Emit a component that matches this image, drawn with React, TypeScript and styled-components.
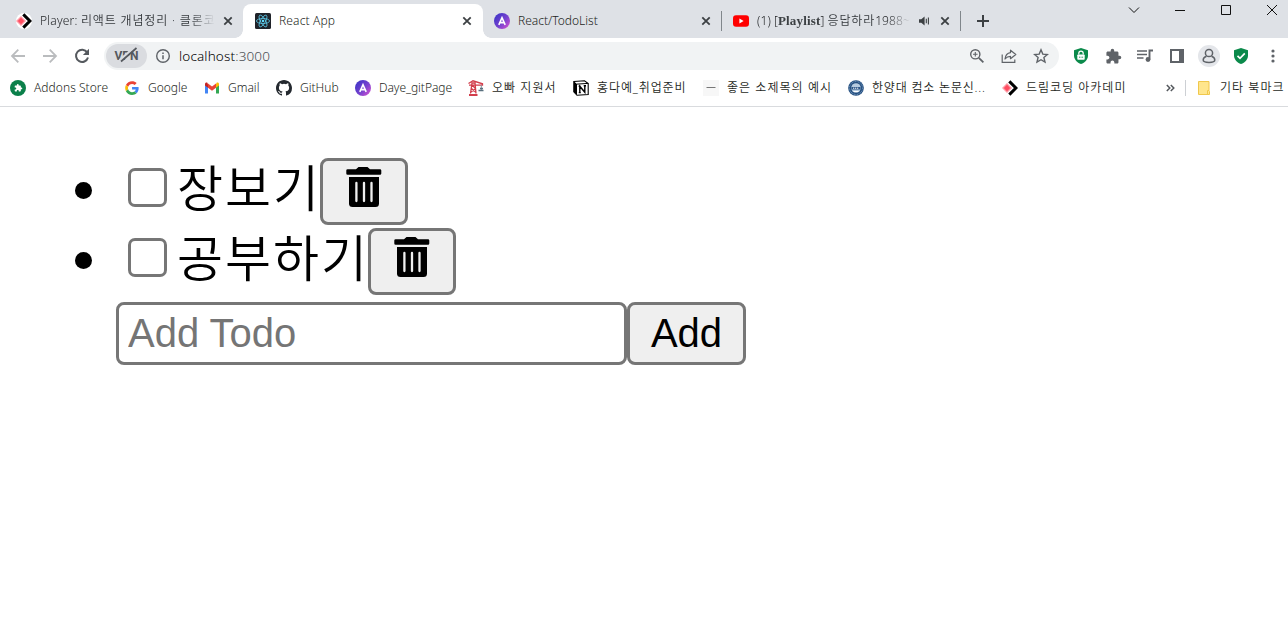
import React from 'react';
import styled, { createGlobalStyle, css } from 'styled-components';

const GlobalStyle = createGlobalStyle`
  * { box-sizing: border-box; }
  html, body { margin: 0; padding: 0; background: #fff; overflow: hidden; }
  body, button, input { font-family: "Noto Sans", "Noto Sans CJK KR", sans-serif; font-weight: 350; }
`;

const Browser = styled.div`
  width: 1288px;
  height: 617px;
  background: #fff;
  overflow: hidden;
`;

/* ---------- tab strip ---------- */
const TabStrip = styled.div`
  display: flex;
  height: 38px;
  padding: 4px 0 0 4px;
  background: #dee1e6;
`;

const Tab = styled.div<{ $active?: boolean }>`
  position: relative;
  display: flex;
  align-items: center;
  width: 239px;
  height: 34px;
  padding: 0 10px 0 12px;
  ${p => p.$active && css`
    width: 240px;
    margin-right: -1px;
    padding-right: 11px;
    background: #fff;
    border-radius: 8px 8px 0 0;
    &::before, &::after {
      content: '';
      position: absolute;
      bottom: 0;
      width: 8px;
      height: 8px;
    }
    &::before { left: -8px; background: radial-gradient(circle at 0 0, transparent 7.5px, #fff 8px); }
    &::after { right: -8px; background: radial-gradient(circle at 100% 0, transparent 7.5px, #fff 8px); }
  `}
`;

const TabTitle = styled.div<{ $width: number; $spacing: number; $fade?: boolean }>`
  width: ${p => p.$width}px;
  margin-left: 8px;
  overflow: hidden;
  white-space: nowrap;
  font-size: 12px;
  line-height: 18px;
  letter-spacing: ${p => p.$spacing}px;
  color: #1d1f22;
  ${p => p.$fade && css`mask-image: linear-gradient(to right, #000 calc(100% - 24px), transparent);`}
`;

const SerifBold = styled.b`
  font-family: "Liberation Serif", serif;
  font-size: 13px;
  letter-spacing: 0.15px;
  color: #3c4043;
`;

const Hangul = styled.span`
  letter-spacing: 0.85px;
  color: #34383c;
`;

const TabActions = styled.div`
  display: flex;
  align-items: center;
  gap: 10px;
  margin-left: auto;
`;

const TabDivider = styled.div`
  width: 1px;
  height: 20px;
  margin: 7px -1px 0 0;
  background: #80868b;
`;

const NewTab = styled.div`
  display: flex;
  margin: 11px 0 0 17px;
`;

const WindowControls = styled.div`
  display: flex;
  gap: 34px;
  margin: 0 10px 0 auto;
`;

/* ---------- toolbar ---------- */
const Toolbar = styled.div`
  display: flex;
  align-items: center;
  height: 36px;
  padding-left: 10px;
`;

const NavButtons = styled.div`
  display: flex;
  gap: 16px;
  width: 94px;
`;

const Omnibox = styled.div`
  display: flex;
  align-items: center;
  width: 955px;
  height: 28px;
  padding: 0 10px 0 2px;
  border-radius: 14px;
  background: #f1f3f4;
`;

const VpnChip = styled.div`
  position: relative;
  display: flex;
  align-items: center;
  justify-content: center;
  width: 41px;
  height: 24px;
  margin-right: 8px;
  border-radius: 12px;
  background: #dadce0;
  color: #55595e;
  font: bold 12px/24px Roboto, sans-serif;
  svg { position: absolute; left: 8px; top: 3px; }
`;

const Url = styled.div`
  margin-left: 8px;
  font-size: 13.5px;
  line-height: 20px;
  letter-spacing: 0.15px;
  color: #000;
  span { color: #4a4e53; }
`;

const OmniboxActions = styled.div`
  display: flex;
  gap: 16px;
  margin-left: auto;
`;

const Extensions = styled.div`
  display: flex;
  align-items: center;
  gap: 10px;
  margin-left: 11px;
`;

const IconSlot = styled.div<{ $filled?: boolean }>`
  display: flex;
  align-items: center;
  justify-content: center;
  width: 22px;
  height: 22px;
  border-radius: 50%;
  background: ${p => (p.$filled ? '#e4e6ea' : 'transparent')};
`;

/* ---------- bookmarks ---------- */
const BookmarkBar = styled.div`
  display: flex;
  align-items: center;
  height: 33px;
  padding: 0 0 5px 10px;
  border-bottom: 1px solid #d9dbde;
`;

const Bookmark = styled.div<{ $width: number; $spacing: number; $gap?: number }>`
  display: flex;
  flex: none;
  align-items: center;
  gap: ${p => p.$gap ?? 8}px;
  width: ${p => p.$width}px;
  font-size: 12px;
  line-height: 18px;
  letter-spacing: ${p => p.$spacing}px;
  white-space: nowrap;
  color: #1d1f22;
  svg { flex: none; }
`;

const BarDivider = styled.div`
  width: 1px;
  height: 16px;
  margin: 0 12px 0 10px;
  background: #cdd0d4;
`;

/* ---------- page ---------- */
const Page = styled.main`
  padding: 51px 0 0 116px;
`;

const TodoList = styled.ul`
  margin: 0;
  padding: 0;
  list-style: none;
`;

const TodoItem = styled.li`
  display: flex;
  align-items: flex-start;
  height: 70px;
  margin-left: -41px;
  color: #000;
`;

const Bullet = styled.span`
  width: 17px;
  height: 17px;
  margin: 24px 36px 0 0;
  border-radius: 50%;
  background: #000;
`;

const Checkbox = styled.input`
  appearance: none;
  width: 39px;
  height: 39px;
  margin: 10px 10px 0 0;
  border: 3px solid #767676;
  border-radius: 7px;
  background: #fff;
`;

const TodoText = styled.span`
  height: 67px;
  font: 350 50px/67px "Noto Sans CJK KR", sans-serif;
  letter-spacing: 2px;
  margin: -6px -1px 0 0;
  white-space: nowrap;
`;

const buttonBox = css`
  border: 3px solid #767676;
  border-radius: 8px;
  background: #efefef;
  color: #000;
`;

const DeleteButton = styled.button`
  ${buttonBox}
  display: flex;
  justify-content: center;
  width: 88px;
  height: 67px;
  padding: 6px 0 0;
`;

const AddForm = styled.form`
  display: flex;
  margin-top: 4px;
`;

const TodoInput = styled.input`
  width: 511px;
  height: 63px;
  padding: 0 9px;
  border: 3px solid #767676;
  border-radius: 8px;
  background: #fff;
  font: 40px "Liberation Sans", Arial, sans-serif;
  outline: none;
  &::placeholder { color: #757575; opacity: 1; }
`;

const AddButton = styled.button`
  ${buttonBox}
  width: 119px;
  height: 63px;
  padding: 0;
  font: 40px "Liberation Sans", Arial, sans-serif;
`;

/* ---------- icons ---------- */
const CloseIcon = () => (
  <svg width="10" height="10" viewBox="0 0 10 10"><path d="M1.3 1.3l7.4 7.4M8.7 1.3L1.3 8.7" stroke="#3c4043" strokeWidth="1.8" /></svg>
);
const DreamIcon = ({ disc }: { disc?: boolean }) => (
  <svg width="16" height="16" viewBox="0 0 16 16">
    {disc && <circle cx="8" cy="8" r="8" fill="#fff" />}
    <path d="M5 3l5 5-5 5-5-5z" fill="#ff9aa5" />
    <path d="M5 4.8L8.2 8 5 11.2 1.8 8z" fill="#ff4d61" />
    <path d="M7.3 1.4L13.9 8l-6.6 6.6" fill="none" stroke="#000" strokeWidth="3" />
  </svg>
);
const ReactIcon = () => (
  <svg width="16" height="16" viewBox="0 0 16 16">
    <rect width="16" height="16" rx="1.5" fill="#20232a" />
    <g fill="none" stroke="#5cc9e8" strokeWidth="0.8">
      <ellipse cx="8" cy="8" rx="6.6" ry="2.5" />
      <ellipse cx="8" cy="8" rx="6.6" ry="2.5" transform="rotate(60 8 8)" />
      <ellipse cx="8" cy="8" rx="6.6" ry="2.5" transform="rotate(120 8 8)" />
    </g>
    <circle cx="8" cy="8" r="1.3" fill="#61dafb" />
  </svg>
);
const BlogIcon = ({ id }: { id: string }) => (
  <svg width="16" height="16" viewBox="0 0 16 16">
    <defs><linearGradient id={id} x1="0.1" y1="0.2" x2="0.9" y2="0.9"><stop offset="0" stopColor="#4636c8" /><stop offset="0.55" stopColor="#7843cf" /><stop offset="1" stopColor="#c94fd0" /></linearGradient></defs>
    <circle cx="8" cy="8" r="8" fill={`url(#${id})`} />
    <path d="M4.8 11.8L8 4.7l3.2 7.1M6 9.6h4" fill="none" stroke="#fff" strokeWidth="1.6" />
  </svg>
);
const YoutubeIcon = () => (
  <svg width="16" height="16" viewBox="0 0 16 16"><rect y="2.2" width="16" height="11.6" rx="3" fill="#f00" /><path d="M6.4 5.5v5L10.6 8z" fill="#fff" /></svg>
);
const SpeakerIcon = () => (
  <svg width="11" height="10" viewBox="0 0 11 10"><path d="M0 3.2h2.3L5.6.4v9.2L2.3 6.8H0z" fill="#3c4043" /><path d="M7.3 2.8v4.4M9.4 1.6v6.8" stroke="#3c4043" strokeWidth="1.1" /></svg>
);
const PlusIcon = () => (
  <svg width="12" height="12" viewBox="0 0 12 12"><path d="M6 0v12M0 6h12" stroke="#3c4043" strokeWidth="2" /></svg>
);
const ControlIcon = ({ d }: { d: string }) => (
  <svg width="12" height="12" viewBox="0 0 12 12"><path d={d} fill="none" stroke="#111" strokeWidth="1" /></svg>
);
const ArrowIcon = ({ right }: { right?: boolean }) => (
  <svg width="16" height="16" viewBox="0 0 16 16"><path transform={right ? 'rotate(180 8 8)' : undefined} d="M15 8H2.2M8.3 1.7L2 8l6.3 6.3" fill="none" stroke="#babcbe" strokeWidth="1.8" /></svg>
);
const ReloadIcon = () => (
  <svg width="16" height="16" viewBox="0 0 16 16"><path d="M13.2 4.4A6.1 6.1 0 1 0 14 9.5" fill="none" stroke="#55595e" strokeWidth="2" /><path d="M15 .8v6.1H8.9z" fill="#55595e" /></svg>
);
const InfoIcon = () => (
  <svg width="16" height="16" viewBox="0 0 16 16"><circle cx="8" cy="8" r="6.3" fill="none" stroke="#5f6368" strokeWidth="1.4" /><path d="M8 7.2v4M8 4.5v1.6" stroke="#5f6368" strokeWidth="1.5" /></svg>
);
const ZoomIcon = () => (
  <svg width="16" height="16" viewBox="0 0 16 16" fill="none" stroke="#5f6368"><circle cx="6.3" cy="6.3" r="4.6" strokeWidth="1.4" /><path d="M9.8 9.8l4.6 4.6" strokeWidth="1.8" /><path d="M6.3 4v4.6M4 6.3h4.6" strokeWidth="1.1" /></svg>
);
const ShareIcon = () => (
  <svg width="16" height="16" viewBox="0 0 16 16" fill="none" stroke="#5f6368" strokeWidth="1.2"><path d="M1.2 6.5v7.9h12.6v-3" /><path d="M9.5 2.2L14.8 6.5 9.5 10.7V8.3C7 8.3 5.4 9.2 4 11c.4-3.3 2-5.9 5.5-6.4z" strokeLinejoin="round" /></svg>
);
const StarIcon = () => (
  <svg width="16" height="16" viewBox="0 0 16 16"><path d="M8 1.8l1.8 4.3 4.6.4-3.5 3 1.1 4.6L8 11.7l-4 2.4 1.1-4.6-3.5-3 4.6-.4z" fill="none" stroke="#5f6368" strokeWidth="1.4" /></svg>
);
const shieldPath = 'M7 0L14 2.2V7.5C14 11.5 11 14.6 7 16 3 14.6 0 11.5 0 7.5V2.2z';
const LockShieldIcon = () => (
  <svg width="14" height="16" viewBox="0 0 14 16"><path d={shieldPath} fill="#0b8a4b" /><rect x="3.3" y="6.5" width="7.4" height="5.3" rx="0.8" fill="#fff" /><path d="M4.8 6.5V5.3a2.2 2.2 0 0 1 4.4 0v1.2" fill="none" stroke="#fff" strokeWidth="1.2" /><path d="M5 9.2h.9M6.6 9.2h.9M8.2 9.2h.9" stroke="#0b8a4b" strokeWidth="1" /></svg>
);
const CheckShieldIcon = () => (
  <svg width="14" height="16" viewBox="0 0 14 16"><path d={shieldPath} fill="#0b8a4b" /><path d="M3.5 7.8L6 10.3l4.8-5" fill="none" stroke="#fff" strokeWidth="1.7" /></svg>
);
const puzzlePath = 'M20.5 11H19V7c0-1.1-.9-2-2-2h-4V3.5a2.5 2.5 0 0 0-5 0V5H4c-1.1 0-2 .9-2 2v3.800h1.500c1.500 0 2.700 1.200 2.700 2.700S5 16.200 3.500 16.200H2V20c0 1.100.9 2 2 2h3.800v-1.500c0-1.500 1.200-2.700 2.700-2.700s2.700 1.200 2.700 2.700V22H17c1.100 0 2-.9 2-2v-4h1.500a2.500 2.500 0 0 0 0-5z';
const PuzzleIcon = () => (
  <svg width="17" height="17" viewBox="0 0 24 24"><path d={puzzlePath} fill="#5f6368" /></svg>
);
const MusicIcon = () => (
  <svg width="17" height="16" viewBox="0 0 17 16"><path d="M0 3h10M0 6.500h10M0 10h6.500" stroke="#5f6368" strokeWidth="1.500" /><path d="M12.500 11.500V2.500h3.500" fill="none" stroke="#5f6368" strokeWidth="1.900" /><circle cx="11" cy="11.500" r="2.400" fill="#5f6368" /></svg>
);
const PanelIcon = () => (
  <svg width="14" height="14" viewBox="0 0 14 14"><path d="M0 0h14v14H0zM2 2v10h7V2z" fill="#5f6368" fillRule="evenodd" /></svg>
);
const ProfileIcon = () => (
  <svg width="16" height="16" viewBox="0 0 16 16" fill="none" stroke="#5f6368" strokeWidth="1.500"><circle cx="8" cy="5" r="3.600" /><path d="M5.500 8.200C3.200 8.900 2.200 10.300 2.200 12c0 1.800 1.700 2.400 5.800 2.400s5.800-.6 5.800-2.400c0-1.700-1-3.100-3.300-3.800" /></svg>
);
const MoreIcon = () => (
  <svg width="4" height="14" viewBox="0 0 4 14" fill="#5f6368"><circle cx="2" cy="2" r="1.600" /><circle cx="2" cy="7" r="1.600" /><circle cx="2" cy="12" r="1.600" /></svg>
);
const AddonIcon = () => (
  <svg width="16" height="16" viewBox="0 0 16 16"><circle cx="8" cy="8" r="8" fill="#0b804a" /><path transform="translate(4 3.600) scale(.36)" d={puzzlePath} fill="#fff" /></svg>
);
const GoogleIcon = () => (
  <svg width="16" height="16" viewBox="0 0 48 48"><g transform="translate(3.500 3.500) scale(.86)"><path fill="#EA4335" d="M24 9.500c3.540 0 6.710 1.220 9.210 3.600l6.850-6.850C35.900 2.380 30.470 0 24 0 14.620 0 6.510 5.380 2.560 13.220l7.980 6.190C12.430 13.720 17.740 9.500 24 9.500z" /><path fill="#4285F4" d="M46.980 24.550c0-1.570-.15-3.090-.38-4.550H24v9.020h12.940c-.58 2.960-2.260 5.480-4.780 7.180l7.730 6c4.510-4.180 7.090-10.360 7.090-17.650z" /><path fill="#FBBC05" d="M10.530 28.590A14.500 14.500 0 0 1 9.770 24c0-1.600.27-3.140.76-4.590l-7.980-6.190A23.900 23.900 0 0 0 0 24c0 3.880.92 7.540 2.560 10.780z" /><path fill="#34A853" d="M24 48c6.480 0 11.930-2.130 15.890-5.810l-7.730-6c-2.150 1.450-4.920 2.300-8.160 2.300-6.260 0-11.570-4.220-13.470-9.910l-7.980 6.190C6.510 42.620 14.620 48 24 48z" /></g></svg>
);
const GmailIcon = () => (
  <svg width="16" height="16" viewBox="0 0 16 16"><path d="M1 4v9.500h3V6.300z" fill="#4285f4" /><path d="M12 6.300v7.200h3V4z" fill="#34a853" /><path d="M12 4.200v3.600l3-2.300V4c0-1.500-1.500-2-2.400-1.300z" fill="#fbbc04" /><path d="M4 4.200v3.600L1 5.500V4c0-1.500 1.500-2 2.400-1.300z" fill="#c5221f" /><path d="M4 3.400l4 3 4-3v4.400l-4 3-4-3z" fill="#ea4335" /></svg>
);
const GithubIcon = () => (
  <svg width="16" height="16" viewBox="0 0 16 16"><path fill="#24292f" d="M8 0C3.580 0 0 3.580 0 8c0 3.540 2.290 6.530 5.470 7.590.4.070.55-.17.55-.38 0-.19-.01-.82-.01-1.490-2.010.37-2.530-.49-2.690-.94-.09-.23-.48-.94-.82-1.130-.28-.15-.68-.52-.01-.53.63-.01 1.080.58 1.230.82.72 1.210 1.870.87 2.330.66.07-.52.28-.87.51-1.070-1.780-.2-3.640-.89-3.640-3.950 0-.87.31-1.590.82-2.150-.08-.2-.36-1.020.08-2.120 0 0 .67-.21 2.200.82a7.420 7.420 0 0 1 4 0c1.530-1.040 2.200-.82 2.200-.82.44 1.100.16 1.920.08 2.120.51.56.82 1.270.82 2.150 0 3.070-1.870 3.750-3.650 3.950.29.25.54.73.54 1.480 0 1.070-.01 1.930-.01 2.200 0 .21.15.46.55.38A8.010 8.010 0 0 0 16 8c0-4.420-3.580-8-8-8z" /></svg>
);
const CraneIcon = () => (
  <svg width="16" height="16" viewBox="0 0 16 16"><path d="M2.500 13.500L4 3h3l1 10.500M.5 3.500L5 .8l9.500 3v1.400H1M3 12l4.500-3.300M3.500 8.500l4 3.500M4 5l3 3" fill="none" stroke="#d23d4b" strokeWidth="1.300" /><path d="M1 14h8.500v2H1z" fill="#d23d4b" /><path d="M13.300 5v5" stroke="#8595a0" strokeWidth="1" /><path d="M10.500 10.500h5M12 8.500h3" stroke="#59707e" strokeWidth="1.300" /></svg>
);
const NotionIcon = () => (
  <svg width="16" height="16" viewBox="0 0 16 16"><path d="M.8 1.500L11.500.8l3.700 2.700v11L4 15.300.8 11.800z" fill="#fff" stroke="#000" strokeWidth="1.100" /><path d="M1 1.500l3 2.600v11L.8 11.800z" fill="#000" /><path d="M4 4.100l11.200-.7" stroke="#000" strokeWidth="1" /><path d="M6.800 12.500V6.200l5 6V5.700M5.700 6.200h2M10.700 5.700H13M5.800 12.600h2" fill="none" stroke="#000" strokeWidth="1.400" /></svg>
);
const DashIcon = () => (
  <svg width="16" height="16" viewBox="0 0 16 16"><rect width="16" height="16" fill="#f7f7f7" /><path d="M3.500 7.500h9" stroke="#777" /></svg>
);
const CrestIcon = () => (
  <svg width="16" height="16" viewBox="0 0 16 16"><circle cx="8" cy="8" r="7.800" fill="#214b7c" /><circle cx="8" cy="8" r="6.500" fill="none" stroke="#6389b2" strokeWidth="1.200" strokeDasharray="1 .6" /><circle cx="8" cy="8" r="4.800" fill="#b6cbe0" /><path d="M3.500 7h9v2.500h-9z" fill="#2a5487" /><path d="M5 8.200h6" stroke="#fff" strokeWidth="1" strokeDasharray="1.300 .7" /><path d="M5.500 11.500h5" stroke="#fff" /></svg>
);
const FolderIcon = () => (
  <svg width="12" height="14" viewBox="0 0 12 14"><path d="M.5.500h10.500v9l.5 1v3H.5z" fill="#ffe68d" stroke="#f0c84c" /><path d="M11 9.500H9.500v4" fill="none" stroke="#f0c84c" /></svg>
);
const OverflowIcon = () => (
  <svg width="9" height="8" viewBox="0 0 9 8"><path d="M.8 1l3 3-3 3M4.800 1l3 3-3 3" fill="none" stroke="#55595e" strokeWidth="1.500" /></svg>
);
const TrashIcon = () => (
  <svg width="36" height="41" viewBox="0 0 36 41"><path d="M12.500 0h9l2.500 2.300h10a1.300 1.300 0 0 1 1.300 1.300v2.800a1.300 1.300 0 0 1-1.300 1.300H1.600A1.300 1.300 0 0 1 .3 6.400V3.600a1.300 1.300 0 0 1 1.300-1.300H10z" /><path d="M3 10h30v26.500a3.500 3.500 0 0 1-3.500 3.500h-23A3.500 3.500 0 0 1 3 36.500z" /><path d="M10.400 16v18M18 16v18M25.500 16v18" stroke="#efefef" strokeWidth="2.300" strokeLinecap="round" /></svg>
);

const bookmarks = [
  { label: 'Addons Store', width: 114, spacing: 0.05, icon: <AddonIcon /> },
  { label: 'Google', width: 80, spacing: 0, icon: <GoogleIcon /> },
  { label: 'Gmail', width: 72, spacing: 0, icon: <GmailIcon /> },
  { label: 'GitHub', width: 79, spacing: 0, icon: <GithubIcon /> },
  { label: 'Daye_gitPage', width: 113, spacing: -0.05, icon: <BlogIcon id="blog-bookmark" /> },
  { label: '오빠 지원서', width: 105, spacing: 1.05, icon: <CraneIcon /> },
  { label: '홍다예_취업준비', width: 130, spacing: 0.9, icon: <NotionIcon /> },
  { label: '좋은 소제목의 예시', width: 145, spacing: 1.05, icon: <DashIcon /> },
  { label: '한양대 컴소 논문신...', width: 154, spacing: 0.8, icon: <CrestIcon /> },
  { label: '드림코딩 아카데미', width: 164, spacing: 1, icon: <DreamIcon /> },
];

const windowIcons = [
  'M1 3.500l5 5 5-5',
  'M1 6.500h10',
  'M1.500 1.500h9v9h-9z',
  'M1 1l10 10M11 1L1 11',
];

const todos = ['장보기', '공부하기'];

export default function App() {
  return (
    <Browser>
      <GlobalStyle />
      <TabStrip>
        <Tab>
          <DreamIcon disc />
          <TabTitle $width={175} $spacing={0.2} $fade>Player: <Hangul>리액트 개념정리 · 클론코</Hangul></TabTitle>
          <TabActions><CloseIcon /></TabActions>
        </Tab>
        <Tab $active>
          <ReactIcon />
          <TabTitle $width={170} $spacing={0.15}>React App</TabTitle>
          <TabActions><CloseIcon /></TabActions>
        </Tab>
        <Tab>
          <BlogIcon id="blog-tab" />
          <TabTitle $width={170} $spacing={0}>React/TodoList</TabTitle>
          <TabActions><CloseIcon /></TabActions>
        </Tab>
        <TabDivider />
        <Tab>
          <YoutubeIcon />
          <TabTitle $width={154} $spacing={0.1} $fade>(1) [<SerifBold>Playlist</SerifBold>] <Hangul>응답하라</Hangul>1988~</TabTitle>
          <TabActions><SpeakerIcon /><CloseIcon /></TabActions>
        </Tab>
        <TabDivider />
        <NewTab><PlusIcon /></NewTab>
        <WindowControls>
          {windowIcons.map(d => <ControlIcon key={d} d={d} />)}
        </WindowControls>
      </TabStrip>
      <Toolbar>
        <NavButtons><ArrowIcon /><ArrowIcon right /><ReloadIcon /></NavButtons>
        <Omnibox>
          <VpnChip>
            VPN
            <svg width="26" height="18" viewBox="0 0 26 18"><path d="M5.500 13.500L20.500 .5" stroke="#dadce0" strokeWidth="2.500" /><path d="M7 14.500L22.500 1" stroke="#55595e" strokeWidth="1.700" /></svg>
          </VpnChip>
          <InfoIcon />
          <Url>localhost<span>:3000</span></Url>
          <OmniboxActions><ZoomIcon /><ShareIcon /><StarIcon /></OmniboxActions>
        </Omnibox>
        <Extensions>
          <IconSlot><LockShieldIcon /></IconSlot>
          <IconSlot><PuzzleIcon /></IconSlot>
          <IconSlot><MusicIcon /></IconSlot>
          <IconSlot><PanelIcon /></IconSlot>
          <IconSlot $filled><ProfileIcon /></IconSlot>
          <IconSlot><CheckShieldIcon /></IconSlot>
          <IconSlot><MoreIcon /></IconSlot>
        </Extensions>
      </Toolbar>
      <BookmarkBar>
        {bookmarks.map(b => (
          <Bookmark key={b.label} $width={b.width} $spacing={b.spacing}>{b.icon}{b.label}</Bookmark>
        ))}
        <OverflowIcon />
        <BarDivider />
        <Bookmark $width={90} $spacing={1.05} $gap={10}><FolderIcon />기타 북마크</Bookmark>
      </BookmarkBar>
      <Page>
        <TodoList>
          {todos.map(t => (
            <TodoItem key={t}>
              <Bullet />
              <Checkbox type="checkbox" />
              <TodoText>{t}</TodoText>
              <DeleteButton type="button"><TrashIcon /></DeleteButton>
            </TodoItem>
          ))}
        </TodoList>
        <AddForm>
          <TodoInput placeholder="Add Todo" />
          <AddButton type="button">Add</AddButton>
        </AddForm>
      </Page>
    </Browser>
  );
}
